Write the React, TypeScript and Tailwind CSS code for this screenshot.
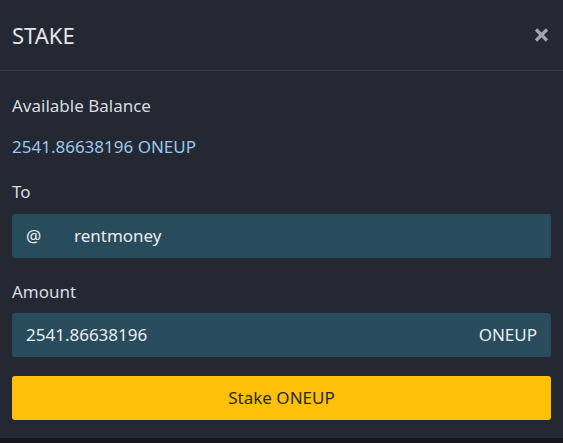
import React from 'react';

const FONT = { fontFamily: '"Noto Sans", "Open Sans", sans-serif' };

export default function App() {
  return (
    <div className="flex h-[443px] w-[563px] flex-col bg-[#15171c]" style={FONT}>
      <div className="flex h-[438px] flex-col bg-[#232833]">
        <header className="flex h-[71px] items-center justify-between border-b border-[#363c48] pl-3 pr-[14px]">
          <h1 className="text-[22px] leading-none text-[#e3e6ea]">STAKE</h1>
          <button className="flex h-[16px] w-[15px] items-center justify-center text-[#a0a5ae]">
            <svg width="15" height="16" viewBox="0 0 15 16">
              <path d="M2 2.5 L13 13.5 M13 2.5 L2 13.5" stroke="currentColor" strokeWidth="3.2" />
            </svg>
          </button>
        </header>

        <div className="flex flex-col px-3 pt-[23px] text-[17px] leading-[24px]">
          <p className="text-[#d8dce1]">Available Balance</p>
          <p className="mt-[17px] text-[#9ac9ea]">2541.86638196 ONEUP</p>

          <label className="mt-[21px] text-[#d8dce1]">To</label>
          <div className="mt-[10px] flex h-[44px] items-center rounded-[3px] bg-[#284c5c] px-[14px] text-[#e8ecef]">
            <span className="w-[48px]">@</span>
            <span>rentmoney</span>
          </div>

          <label className="mt-[22px] text-[#d8dce1]">Amount</label>
          <div className="mt-[9px] flex h-[44px] items-center justify-between rounded-[3px] bg-[#284c5c] px-[14px] text-[#e8ecef]">
            <span>2541.86638196</span>
            <span>ONEUP</span>
          </div>

          <button className="mt-[19px] flex h-[44px] items-center justify-center rounded-[3px] bg-[#ffc107] text-[#2b2a22]">
            Stake ONEUP
          </button>
        </div>
      </div>
    </div>
  );
}
